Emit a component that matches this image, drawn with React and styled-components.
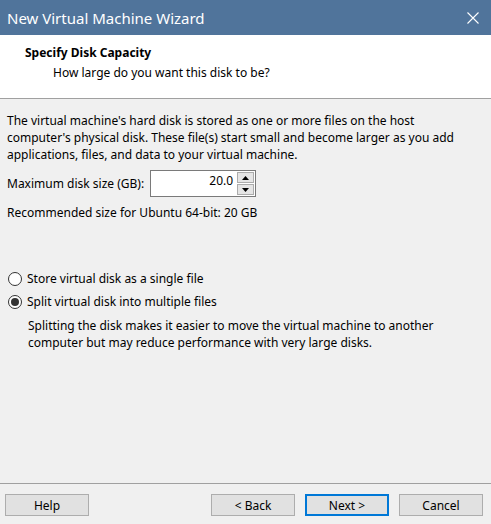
import React from 'react';
import styled, { createGlobalStyle } from 'styled-components';

const GlobalStyle = createGlobalStyle`
  html, body {
    margin: 0;
    padding: 0;
    background: #f0f0f0;
  }
  body {
    font-family: "Noto Sans", "Open Sans", sans-serif;
    font-size: 12px;
    color: #000;
  }
`

const Window = styled.div`
  width: 491px;
  height: 524px;
  display: flex;
  flex-direction: column;
  background: #f0f0f0;
  overflow: hidden;
`

const TitleBar = styled.div`
  height: 35px;
  flex: 0 0 35px;
  background: #50749b;
  color: #fff;
  display: flex;
  align-items: center;
  justify-content: space-between;
  padding: 0 12px 0 7px;
  font-size: 15px;
`

const CloseIcon = () => (
  <svg width="12" height="12" viewBox="0 0 12 12">
    <path d="M0.5 0.5 L11.5 11.5 M11.5 0.5 L0.5 11.5" stroke="#fff" strokeWidth="1.1" />
  </svg>
)

const Header = styled.div`
  height: 64px;
  flex: 0 0 64px;
  box-sizing: border-box;
  background: #fff;
  border-bottom: 1px solid #a0a0a0;
  padding: 10px 0 0 25px;
`

const HeaderTitle = styled.div`
  font-weight: bold;
  line-height: 16px;
`

const HeaderSub = styled.div`
  line-height: 16px;
  margin: 4px 0 0 28px;
`

const Body = styled.div`
  flex: 1;
  padding: 13px 7px 0 7px;
`

const Para = styled.p`
  margin: 0;
  line-height: 17px;
  padding-left: ${p => p.indent || 0}px;
`

const SizeRow = styled.div`
  display: flex;
  align-items: center;
  gap: 6px;
  margin-top: 7px;
`

const SpinBox = styled.div`
  display: flex;
  width: 106px;
  height: 27px;
  box-sizing: border-box;
  border: 1px solid #7a7a7a;
  background: #fff;
`

const SpinValue = styled.div`
  flex: 1;
  text-align: right;
  padding: 2px 4px 0 0;
  line-height: 16px;
`

const SpinButtons = styled.div`
  width: 17px;
  display: flex;
  flex-direction: column;
  gap: 1px;
  padding: 1px 1px 1px 0;
`

const SpinButton = styled.div`
  flex: 1;
  background: #e5e5e5;
  border: 1px solid #acacac;
  display: flex;
  align-items: center;
  justify-content: center;
`

const Arrow = ({ up }) => (
  <svg width="7" height="4" viewBox="0 0 7 4">
    <path d={up ? 'M0 4 L3.5 0 L7 4 Z' : 'M0 0 L3.5 4 L7 0 Z'} fill="#000" />
  </svg>
)

const Note = styled.div`
  line-height: 16px;
  margin-top: 8px;
`

const Options = styled.div`
  margin-top: 50px;
  display: flex;
  flex-direction: column;
  gap: 7px;
`

const RadioRow = styled.label`
  display: flex;
  align-items: center;
  gap: 5px;
  line-height: 16px;
  padding-left: 1px;
`

const RadioCircle = styled.span`
  width: 14px;
  height: 14px;
  box-sizing: border-box;
  border-radius: 50%;
  border: 1px solid #333;
  background: #fff;
  display: flex;
  align-items: center;
  justify-content: center;
  &::after {
    content: '';
    display: ${p => (p.checked ? 'block' : 'none')};
    width: 8px;
    height: 8px;
    border-radius: 50%;
    background: #333;
  }
`

const Description = styled.div`
  margin-top: 0;
`

const Footer = styled.div`
  flex: 0 0 auto;
  border-top: 1px solid #a0a0a0;
  padding: 10px 8px 8px 5px;
  display: flex;
  align-items: center;
`

const Button = styled.button`
  width: 84px;
  height: 22px;
  box-sizing: border-box;
  margin-left: ${p => p.gap || 0}px;
  background: #e1e1e1;
  border: ${p => (p.primary ? '2px solid #0078d7' : '1px solid #adadad')};
  font-family: inherit;
  font-size: 12px;
  color: #000;
  padding: 0;
`

const Spacer = styled.div`
  flex: 1;
`

export default function App() {
  return (
    <Window>
      <GlobalStyle />
      <TitleBar>
        <span>New Virtual Machine Wizard</span>
        <CloseIcon />
      </TitleBar>
      <Header>
        <HeaderTitle>Specify Disk Capacity</HeaderTitle>
        <HeaderSub>How large do you want this disk to be?</HeaderSub>
      </Header>
      <Body>
        <Para>
          The virtual machine's hard disk is stored as one or more files on the host
          <br />
          computer's physical disk. These file(s) start small and become larger as you add
          <br />
          applications, files, and data to your virtual machine.
        </Para>
        <SizeRow>
          <span>Maximum disk size (GB):</span>
          <SpinBox>
            <SpinValue>20.0</SpinValue>
            <SpinButtons>
              <SpinButton><Arrow up /></SpinButton>
              <SpinButton><Arrow /></SpinButton>
            </SpinButtons>
          </SpinBox>
        </SizeRow>
        <Note>Recommended size for Ubuntu 64-bit: 20 GB</Note>
        <Options>
          <RadioRow>
            <RadioCircle />
            <span>Store virtual disk as a single file</span>
          </RadioRow>
          <RadioRow>
            <RadioCircle checked />
            <span>Split virtual disk into multiple files</span>
          </RadioRow>
          <Description>
            <Para indent={21}>
              Splitting the disk makes it easier to move the virtual machine to another
              <br />
              computer but may reduce performance with very large disks.
            </Para>
          </Description>
        </Options>
      </Body>
      <Footer>
        <Button>Help</Button>
        <Spacer />
        <Button>&lt; Back</Button>
        <Button gap={10} primary>Next &gt;</Button>
        <Button gap={10}>Cancel</Button>
      </Footer>
    </Window>
  );
}
